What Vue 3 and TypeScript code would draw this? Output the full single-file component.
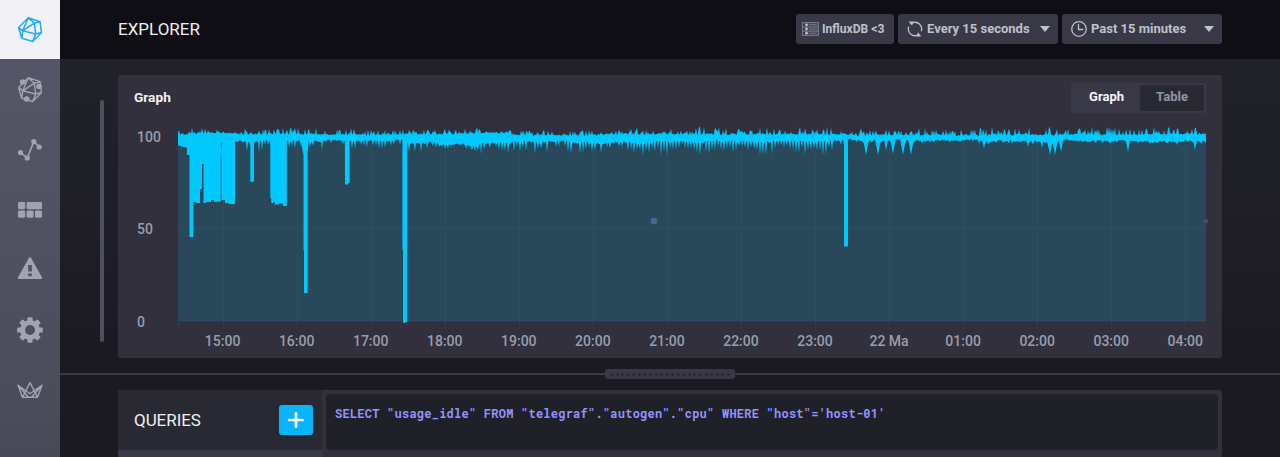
<script setup lang="ts">
const hours = ['15:00', '16:00', '17:00', '18:00', '19:00', '20:00', '21:00', '22:00', '23:00', '22 Ma', '01:00', '02:00', '03:00', '04:00']
const ticks = hours.map((label, i) => ({ label, x: 104.6 + i * 74.05 }))
const values = [
  { label: '100', y: 67 },
  { label: '50', y: 159 },
  { label: '0', y: 252 },
]

// Noise ranges along the series: [end x, top core, top reach, bottom core, bottom reach, spike chance]
type Band = [number, number, number, number, number, number]
const bands: Band[] = [
  [70, 59, 54, 70, 72, 0.2],
  [118, 58, 51, 66, 75, 0.3],
  [180, 59, 52, 65, 79, 0.5],
  [245, 59, 53, 65, 78, 0.5],
  [285, 59.5, 53, 65, 77, 0.5],
  [320, 59, 53, 67, 79, 0.5],
  [360, 58.5, 53, 69, 78, 0.5],
  [392, 57.5, 51, 68, 83, 0.55],
  [470, 60, 55, 66, 81, 0.45],
  [500, 59.5, 53, 67, 81, 0.55],
  [535, 59, 52, 67, 83, 0.75],
  [705, 59, 51, 65.5, 84, 0.8],
  [728, 59, 51, 65, 81, 0.5],
  [870, 60, 53, 64.5, 69, 0.2],
  [930, 59.5, 51, 65.5, 73, 0.25],
  [1030, 59.5, 51, 65, 71, 0.2],
  [1088, 59, 51, 65.5, 71, 0.25],
]
const spikes: [number, number][] = [
  [748, 80], [760, 80], [768, 75], [775, 79], [785, 80], [793, 80],
  [866, 74], [910, 72], [932, 80], [937, 80], [943, 77], [1010, 77], [1077, 75],
]

let seed = 417
function random(): number {
  seed = (seed * 16807) % 2147483647
  return seed / 2147483647
}

const upper: string[] = []
const lower: string[] = []
for (let x = 60; x <= 1088; x += 1) {
  const band = bands.find((b) => x <= b[0]) ?? bands[bands.length - 1]
  const swell = 0.66 + 0.34 * Math.sin(x / 6.5) * Math.cos(x / 23)
  let top = band[1] + random() * 2 - 1
  let bottom = band[3] + random() * 2.6 - 0.8 + (swell - 0.5) * 3
  if (random() < 0.3) top = band[1] - (band[1] - band[2]) * (0.2 + random() * 0.9) * (0.5 + swell / 2)
  if (x % 3 === 0 && random() < band[5] * 1.2) {
    bottom = band[3] + (band[4] - band[3]) * swell * (0.5 + random() * 0.7)
  }
  for (const [at, depth] of spikes) {
    const distance = Math.abs(x - at)
    if (distance < 3) bottom = Math.max(bottom, depth - distance * 5.5)
  }
  upper.push(`${x},${Math.max(top, 52).toFixed(1)}`)
  lower.unshift(`${x},${Math.min(bottom, 80.5).toFixed(1)}`)
}
const wave = [...upper, ...lower].join(' ')
const area = ['60,246', ...upper, '1088,246'].join(' ')

const drops =
  'M60 60H69V80H71.5V162H75.3V127H78V128H82V114H84V89H85.5V128H88V127H93V125H96V127H100V126.5H102.7V60ZM103.4 60V125H107V128H111V129H117V60Z' +
  'M102 60H104V70L103 82ZM132.3 60H136V106.7H132.3ZM152.3 60H168.8V131H165V128.5H161V129.5H156.8V127H155V128H153.2V123H152.3Z' +
  'M181.5 60H191.5L189.6 77V218H186V175H185.5V80ZM226.8 60H231.6V108H230V109.5H227V109Z' +
  'M284.4 60H289.2V247H287.5V248H285V175H284.4ZM726 60H730V171.5H726Z'

const shell = 'M10.3 1.7 22 5.7 23.5 16.5 14.7 25.5 3.7 22.3.6 11.5ZM10.3 1.7 16.3 7.2 22 5.7M16.3 7.2 17.7 18 23.5 16.5M17.7 18 14.7 25.5M17.7 18 4.7 14.8 16.3 7.2M10.3 1.7 4.7 14.8 3.7 22.3M.6 11.5 4.7 14.8'
const gearTeeth = [0, 45, 90, 135, 180, 225, 270, 315]
const query = `SELECT "usage_idle" FROM "telegraf"."autogen"."cpu" WHERE "host"='host-01'`
</script>

<template>
  <div class="app">
    <nav class="sidebar">
      <a class="nav-item active">
        <svg width="26" height="28" viewBox="-1 0 26 28"><path class="line logo" :d="shell" /></svg>
      </a>
      <a class="nav-item">
        <svg width="26" height="28" viewBox="-1 0 26 28">
          <path class="line thin" :d="shell" />
          <circle cx="4.7" cy="6" r="2.8" /><circle cx="21" cy="10.5" r="2.8" /><circle cx="8.7" cy="23" r="2.8" />
        </svg>
      </a>
      <a class="nav-item">
        <svg width="26" height="24" viewBox="0 0 26 24">
          <path class="line chart-line" d="M3.5 14.6 10.3 20 16.8 3.6 22.2 9" />
          <circle cx="3.5" cy="14.6" r="2.6" /><circle cx="10.3" cy="20" r="2.6" /><circle cx="16.8" cy="3.6" r="2.6" /><circle cx="22.2" cy="9" r="2.6" />
        </svg>
      </a>
      <a class="nav-item">
        <svg width="24" height="16" viewBox="0 0 24 16">
          <rect width="7.2" height="7.2" rx="1.4" /><rect x="8.6" width="15.4" height="7.2" rx="1.4" />
          <rect y="8.5" width="7.2" height="7.2" rx="1.4" /><rect x="8.6" y="8.5" width="7" height="7.2" rx="1.4" /><rect x="17" y="8.5" width="7" height="7.2" rx="1.4" />
        </svg>
      </a>
      <a class="nav-item alert">
        <svg width="26" height="24" viewBox="0 0 26 24">
          <path fill-rule="evenodd" d="M12 1.7q1-1.5 2 0L25.1 21.4q.5 1.6-1.2 1.6H2.1Q.4 23 .9 21.4ZM11.2 9V15.6H14.8V9ZM11.2 17.4V20.2H14.8V17.4Z" />
        </svg>
      </a>
      <a class="nav-item">
        <svg width="26" height="26" viewBox="-13 -13 26 26">
          <circle class="gear-ring" r="7.5" />
          <rect v-for="angle in gearTeeth" :key="angle" x="-2.6" y="-12.8" width="5.2" height="5" rx="1.2" :transform="`rotate(${angle})`" />
        </svg>
      </a>
      <a class="nav-item">
        <svg width="26" height="18" viewBox="0 0 26 18">
          <path class="line thin" d="M5.5 16.3 1 4.2 13 12.8 25 4.2 20.5 16.3ZM5.5 16.3 13 1.6 20.5 16.3M1 4.2 11.5 16.3M25 4.2 14.5 16.3" />
        </svg>
      </a>
    </nav>

    <main class="main">
      <header class="header">
        <h1>EXPLORER</h1>
        <div class="controls">
          <button class="btn source">
            <svg width="17" height="14" viewBox="0 0 17 14">
              <path class="line" d="M.7.7H16.3V13.3H.7ZM.7 4.9H16.3M.7 9.1H16.3M7 2.8H14.5M7 7H14.5M7 11.2H14.5" />
              <circle cx="4.5" cy="2.8" r="1.4" /><circle cx="4.5" cy="7" r="1.4" /><circle cx="4.5" cy="11.2" r="1.4" />
            </svg>
            <span>InfluxDB &lt;3</span>
          </button>
          <button class="btn refresh">
            <svg width="16" height="16" viewBox="0 0 16 16">
              <path class="line" d="M5.4 1.8A6.7 6.7 0 0 1 14.4 9.8M10.6 14.2A6.7 6.7 0 0 1 1.6 6.2" />
              <path d="M1.6.7 6.2.3 5.2 4.8ZM14.4 15.3 9.8 15.7 10.8 11.2Z" />
            </svg>
            <span>Every 15 seconds</span><i class="caret" />
          </button>
          <button class="btn range">
            <svg width="16" height="16" viewBox="0 0 16 16">
              <circle class="line" cx="8" cy="8" r="7.3" /><path class="line" d="M7.5 3.5V8.5H11.8" />
            </svg>
            <span>Past 15 minutes</span><i class="caret" />
          </button>
        </div>
      </header>

      <section class="upper">
        <div class="gutter"><span class="scroll" /></div>
        <div class="panel">
          <div class="panel-head">
            <h2>Graph</h2>
            <div class="tabs"><span class="tab on">Graph</span><span class="tab off">Table</span></div>
          </div>
          <svg class="plot" width="1104" height="238" viewBox="0 45 1104 238">
            <polygon class="area" :points="area" />
            <g class="grid">
              <path d="M60 152.5H1088M60 245.8H1088" />
              <path class="tick" d="M60.5 247V254" />
              <template v-for="tick in ticks" :key="tick.label">
                <path :d="`M${Math.round(tick.x) + 0.5} 60V247`" />
                <path class="tick" :d="`M${Math.round(tick.x) + 0.5} 247V254`" />
              </template>
            </g>
            <polygon class="wave" :points="wave" />
            <path class="wave" :d="drops" />
            <circle class="dot" cx="536" cy="146" r="3.3" />
            <circle class="dot edge" cx="1088" cy="146" r="2" />
            <text v-for="value in values" :key="value.label" x="19" :y="value.y">{{ value.label }}</text>
            <text v-for="tick in ticks" :key="tick.label" class="hour" :x="tick.x" y="271">{{ tick.label }}</text>
          </svg>
        </div>
      </section>

      <div class="splitter">
        <span class="rule" />
        <div class="handle"><i v-for="n in 22" :key="n" /></div>
        <span class="rule" />
      </div>

      <section class="queries">
        <div class="query-list">
          <div class="query-head">
            <h3>QUERIES</h3>
            <button class="add">
              <svg width="16" height="16" viewBox="0 0 16 16"><path d="M8 1.3V14.7M1.3 8H14.7" /></svg>
            </button>
          </div>
        </div>
        <div class="editor"><code>{{ query }}</code></div>
      </section>
    </main>
  </div>
</template>

<style>
html,
body {
  margin: 0;
  background: #1c1b23;
  overflow: hidden;
}
</style>

<style scoped>
.app {
  display: flex;
  width: 1280px;
  height: 457px;
  overflow: hidden;
  font-family: Roboto, 'Liberation Sans', sans-serif;
  background: linear-gradient(#212129 59px, #1f1f27 200px, #1b1a22 350px, #1b1922);
}
h1, h2, h3 { margin: 0; }
button { border: 0; padding: 0; font: inherit; }
.sidebar {
  width: 60px;
  flex: none;
  background: linear-gradient(#555567 59px, #4b4d5b 400px, #474957);
}
.nav-item {
  height: 60px;
  box-sizing: border-box;
  display: flex;
  align-items: center;
  justify-content: center;
  fill: #a0a4b2;
  stroke: none;
}
.nav-item.active { height: 59px; background: #f2f1f6; margin-bottom: 1px; }
.alert { padding-bottom: 4px; }
.line { fill: none; stroke: #a0a4b2; stroke-width: 1.3; stroke-linejoin: round; stroke-linecap: round; }
.logo { stroke: #22adf6; stroke-width: 1.6; }
.thin { stroke-width: 1.4; }
.chart-line { stroke-width: 1.6; }
.gear-ring { fill: none; stroke: #a0a4b2; stroke-width: 5; }
.main { flex: 1; min-width: 0; display: flex; flex-direction: column; }
.header {
  height: 59px;
  flex: none;
  box-sizing: border-box;
  padding: 0 58px 1px;
  display: flex;
  align-items: center;
  justify-content: space-between;
  background: #0f0e15;
}
h1 { font-size: 17px; line-height: 20px; padding-bottom: 1px; font-weight: 400; color: #eeeff2; }
.controls { display: flex; gap: 4px; }
.btn {
  height: 30px;
  box-sizing: border-box;
  border-radius: 3px;
  background: #383846;
  color: #bec2cc;
  font-size: 13px;
  font-weight: 700;
  display: flex;
  align-items: center;
  white-space: nowrap;
  fill: #bec2cc;
}
.btn span { padding-bottom: 1px; }
.btn .line { stroke: #bec2cc; stroke-width: 1.3; }
.source { width: 98px; padding-left: 6px; gap: 3px; font-size: 12.1px; }
.source .line { stroke-width: 0.8; stroke: #989caa; }
.refresh { width: 160px; padding: 0 8px 0 9px; gap: 4px; }
.range { width: 160px; padding: 0 8px 0 9px; gap: 4px; }
.caret { margin-left: auto; border: 5px solid transparent; border-top: 6px solid #bec2cc; border-bottom: 0; }
.upper { display: flex; margin-top: 16px; height: 283px; flex: none; }
.gutter { width: 58px; flex: none; box-sizing: border-box; padding: 25px 0 0 40px; }
.scroll { display: block; width: 4px; height: 242px; border-radius: 2px; background: #4e4f61; }
.panel { width: 1104px; border-radius: 3px; background: #31303c; overflow: hidden; }
.panel-head { height: 45px; display: flex; justify-content: space-between; padding: 0 16px; align-items: center; }
h2 { font-size: 13.7px; line-height: 16px; padding-bottom: 2px; font-weight: 700; color: #f1f1f5; }
.tabs {
  width: 135px;
  height: 30px;
  box-sizing: border-box;
  border: 2px solid #383846;
  border-radius: 3px;
  display: flex;
  background: #383846;
  font-size: 13px;
  font-weight: 700;
}
.tab { display: flex; align-items: center; justify-content: center; padding-bottom: 2px; }
.tab.on { width: 67px; color: #f6f6f8; }
.tab.off { flex: 1; color: #9194a4; background: #292933; border-radius: 2px; }
.plot { display: block; font-size: 14px; fill: #9a9dad; font-weight: 500; }
.area { fill: #29485a; }
.grid path { stroke: #2f4d63; stroke-width: 1; fill: none; }
.grid .tick { stroke: #393946; }
.wave { fill: #00c9ff; }
.dot { fill: #416c90; }
.dot.edge { fill: #4b5265; }
.hour { text-anchor: middle; }
.splitter { height: 10px; margin-top: 11px; flex: none; display: flex; align-items: center; }
.rule { flex: 1; height: 2px; background: #383846; }
.handle {
  width: 130px;
  height: 10px;
  box-sizing: border-box;
  border-radius: 3px;
  background: #383846;
  display: flex;
  align-items: center;
  justify-content: space-between;
  padding: 0 5px;
}
.handle i { width: 3px; height: 3px; border-radius: 50%; background: #292933; }
.queries { margin: 11px 58px 0; height: 67px; display: flex; background: #31303c; border-radius: 3px 3px 0 0; overflow: hidden; }
.query-list { width: 204px; background: #383846; }
.query-head {
  height: 60px;
  box-sizing: border-box;
  padding: 0 9px 0 16px;
  display: flex;
  align-items: center;
  justify-content: space-between;
  background: #292933;
}
h3 { font-size: 17px; font-weight: 400; color: #eeeff2; letter-spacing: -0.05px; }
.add { width: 34px; height: 30px; border-radius: 3px; background: #0ab4fc; display: flex; align-items: center; justify-content: center; }
.add path { stroke: #fff; stroke-width: 2.7; stroke-linecap: round; }
.editor { flex: 1; margin: 4px; height: 56px; box-sizing: border-box; padding: 10px 9px; border-radius: 4px; background: #202028; }
code {
  display: block;
  font: 700 12px/18px 'Roboto Mono', 'DejaVu Sans Mono', monospace;
  letter-spacing: 0.24px;
  color: #9394ff;
  white-space: pre;
}
</style>
